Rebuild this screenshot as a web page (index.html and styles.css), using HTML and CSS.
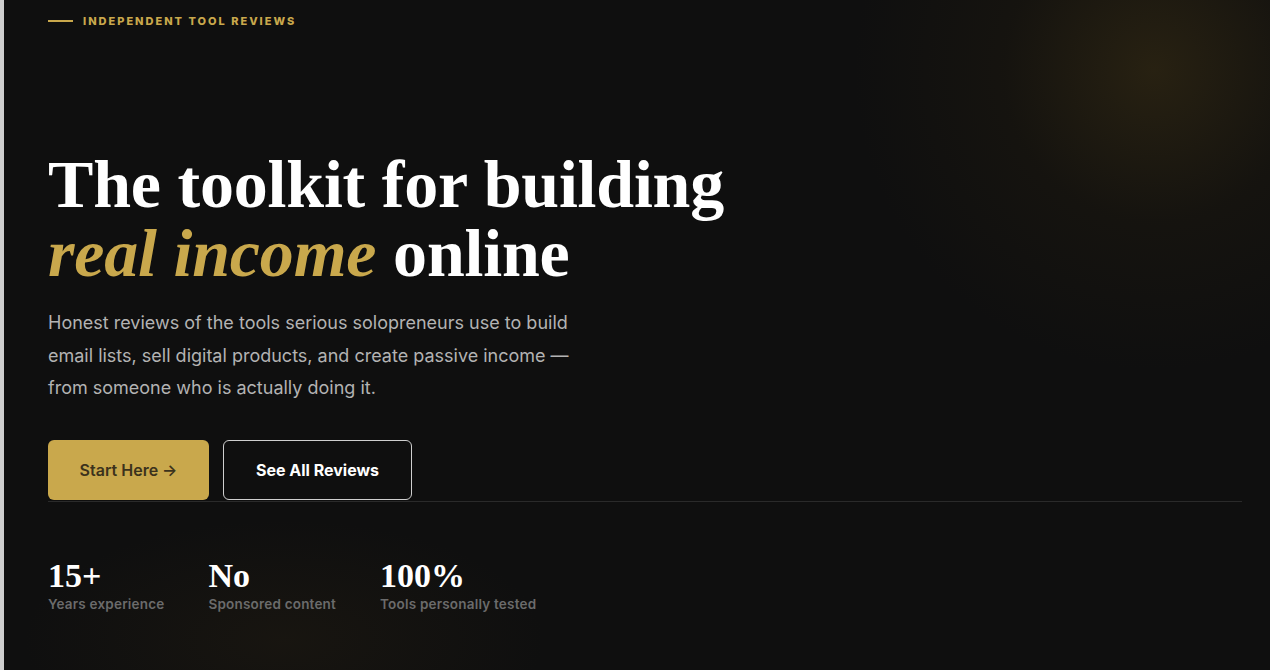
FILE: index.html
```html
<!DOCTYPE html>
<html>
<head>
<meta charset="utf-8">
<link rel="stylesheet" href="styles.css">
</head>
<body>
<main class="hero">
  <div class="eyebrow"><span class="eyebrow-line"></span><span>INDEPENDENT TOOL REVIEWS</span></div>
  <h1 class="title">The toolkit for building<br><em>real income</em> online</h1>
  <p class="lead">Honest reviews of the tools serious solopreneurs use to build email lists, sell digital products, and create passive income — from someone who is actually doing it.</p>
  <div class="actions">
    <a class="btn btn-primary">Start Here →</a>
    <a class="btn btn-outline">See All Reviews</a>
  </div>
  <div class="stats">
    <div class="stat"><div class="stat-num">15+</div><div class="stat-label">Years experience</div></div>
    <div class="stat"><div class="stat-num">No</div><div class="stat-label">Sponsored content</div></div>
    <div class="stat"><div class="stat-num">100%</div><div class="stat-label">Tools personally tested</div></div>
  </div>
</main>
</body>
</html>
```

FILE: styles.css
```css
html, body {
  margin: 0;
  height: 100%;
}
body {
  background: #0f0f0f;
  border-left: 4px solid #cfcfcf;
  box-sizing: border-box;
  font-family: Inter, "Liberation Sans", sans-serif;
  overflow: hidden;
}
.hero {
  height: 100%;
  box-sizing: border-box;
  padding: 14px 28px 0 44px;
  background:
    radial-gradient(circle at 1150px 70px, rgba(60, 48, 20, 0.55) 0, rgba(40, 32, 15, 0.25) 150px, rgba(15, 15, 15, 0) 300px),
    radial-gradient(ellipse 260px 120px at 280px 640px, rgba(40, 32, 18, 0.35), rgba(15, 15, 15, 0));
}
.eyebrow {
  display: flex;
  align-items: center;
  gap: 10px;
  color: #c9a84c;
  font-size: 11px;
  font-weight: 800;
  letter-spacing: 2px;
  height: 14px;
}
.eyebrow-line {
  width: 25px;
  height: 1.5px;
  background: #c9a84c;
}
.title {
  margin: 122px 0 0;
  font-family: "Liberation Serif", "DejaVu Serif", serif;
  font-weight: 700;
  font-size: 68px;
  line-height: 69px;
  color: #ffffff;
  letter-spacing: -0.2px;
}
.title em {
  color: #c9a84c;
  font-style: italic;
}
.lead {
  margin: 19px 0 0;
  width: 545px;
  color: #b3b3b3;
  font-size: 18px;
  line-height: 32.5px;
}
.actions {
  display: flex;
  gap: 14px;
  margin-top: 35px;
}
.btn {
  display: flex;
  align-items: center;
  justify-content: center;
  height: 60px;
  box-sizing: border-box;
  border-radius: 6px;
  font-size: 16px;
  font-weight: 700;
}
.btn-primary {
  width: 161px;
  background: #c9a84c;
  color: #3b321c;
  font-weight: 600;
}
.btn-outline {
  width: 189px;
  border: 1.5px solid #cfcfcf;
  color: #ffffff;
}
.stats {
  margin-top: 1px;
  border-top: 1px solid #2a2a2a;
  display: flex;
  gap: 44px;
  padding-top: 57px;
}
.stat-num {
  font-family: "Liberation Serif", "DejaVu Serif", serif;
  font-weight: 700;
  font-size: 34px;
  line-height: 34px;
  color: #ffffff;
}
.stat-label {
  margin-top: 3px;
  font-size: 13.5px;
  font-weight: 600;
  letter-spacing: 0.2px;
  color: #6b6b6b;
}
```
